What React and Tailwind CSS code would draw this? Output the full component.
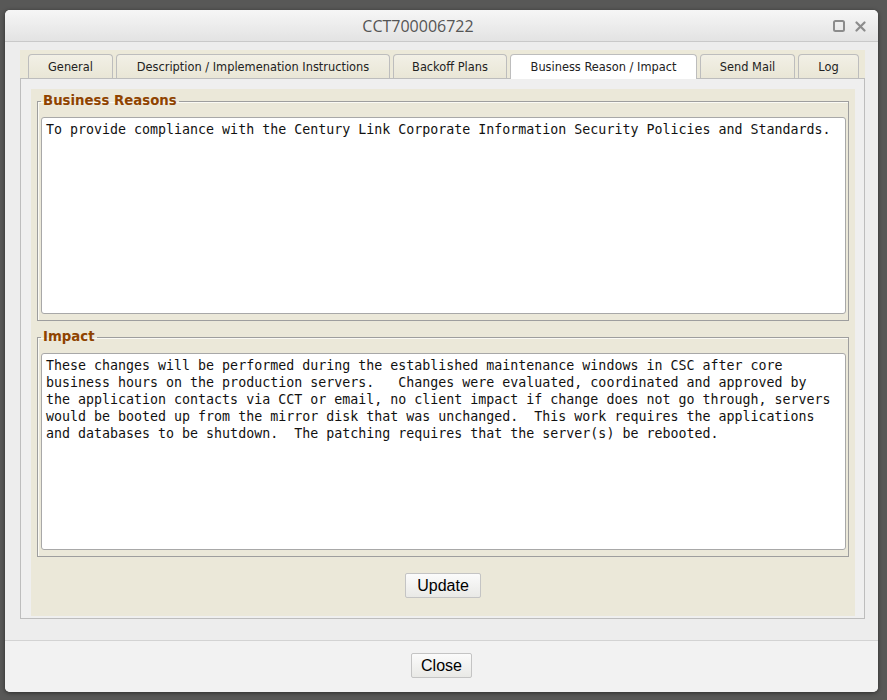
import React from 'react';

const tabs = [
  { label: 'General', w: 'w-[85px]' },
  { label: 'Description / Implemenation Instructions', w: 'w-[274px]' },
  { label: 'Backoff Plans', w: 'w-[114px]' },
  { label: 'Business Reason / Impact', w: 'w-[187px]', active: true },
  { label: 'Send Mail', w: 'w-[95px]' },
  { label: 'Log', w: 'w-[61px]' },
];

const reasons =
  'To provide compliance with the Century Link Corporate Information Security Policies and Standards.';

const impact = [
  'These changes will be performed during the established maintenance windows in CSC after core',
  'business hours on the production servers.   Changes were evaluated, coordinated and approved by',
  'the application contacts via CCT or email, no client impact if change does not go through, servers',
  'would be booted up from the mirror disk that was unchanged.  This work requires the applications',
  'and databases to be shutdown.  The patching requires that the server(s) be rebooted.',
].join('\n');

function Group({ title, text, className = '' }) {
  return (
    <fieldset
      className={`mx-[6px] border border-[#9e9e9e] px-[2px] pb-[6px] pt-[8px] shadow-[inset_1px_1px_0_#fbfaf4] ${className}`}
    >
      <legend className="ml-[1px] px-[2px] text-[13.3px] font-bold leading-[16px] text-[#8f4300] font-['DejaVu_Sans',sans-serif]">
        {title}
      </legend>
      <div className="ml-[1px] h-[197px] overflow-hidden whitespace-pre-wrap rounded-[3px] border border-[#a8a8a8] bg-white px-[4px] pt-[3px] text-[13.3px] leading-[17px] text-[#111] font-['DejaVu_Sans_Mono',monospace]">
        {text}
      </div>
    </fieldset>
  );
}

function Button({ children, className = '' }) {
  return (
    <button
      className={`h-[25px] rounded-[2px] border border-[#c4c4c4] bg-gradient-to-b from-[#fbfbfb] to-[#e9e9e6] text-[16px] leading-none text-black font-['Liberation_Sans',Arial,sans-serif] ${className}`}
    >
      {children}
    </button>
  );
}

export default function App() {
  return (
    <div className="h-[700px] w-[887px] overflow-hidden bg-[#585857] pt-[10px] pl-[5px]">
      <div className="flex h-[682px] w-[873px] flex-col overflow-hidden rounded-[5px] bg-[#ededed] shadow-[0_1px_4px_rgba(0,0,0,0.5)]">
        {/* title bar */}
        <div className="flex h-[32px] shrink-0 items-center border-b border-[#c9c9c9] bg-gradient-to-b from-[#f6f6f6] to-[#e3e3e3]">
          <span className="flex-1 pt-[1px] text-center text-[16px] text-[#555] font-['Open_Sans',sans-serif]">
            CCT700006722
          </span>
          <div className="flex w-[47px] items-center gap-[10px] pl-[2px] pt-[1px]">
            <svg width="12" height="12" viewBox="0 0 12 12">
              <rect x="1" y="1" width="10" height="10" rx="1.5" fill="none" stroke="#8c8c8c" strokeWidth="2" />
            </svg>
            <svg width="11" height="11" viewBox="0 0 11 11">
              <path d="M1.5 1.5 L9.5 9.5 M9.5 1.5 L1.5 9.5" stroke="#8c8c8c" strokeWidth="2.2" strokeLinecap="round" />
            </svg>
          </div>
        </div>

        {/* body */}
        <div className="flex-1 pl-[15px] pr-[13px] pt-[8px]">
          <div className="flex h-[28px] items-end gap-[3px] bg-[#ece9d9] pl-[8px]">
            {tabs.map((t) => (
              <div
                key={t.label}
                className={`${t.w} flex items-center justify-center rounded-t-[4px] border border-b-0 border-[#bdbdbd] pt-[2px] text-[11.4px] text-[#222] font-['DejaVu_Sans',sans-serif] ${
                  t.active
                    ? 'relative z-10 -mb-px h-[25px] bg-white'
                    : 'h-[24px] bg-gradient-to-b from-[#f2f0e6] to-[#e9e6d6]'
                }`}
              >
                {t.label}
              </div>
            ))}
          </div>

          <div className="border border-[#bdbdbd] bg-[#efefef] pb-[2px] pl-[10px] pr-[9px] pt-[10px]">
            <div className="flex flex-col bg-[#ebe8d9] pb-[18px] pt-[4px]">
              <Group title="Business Reasons" text={reasons} />
              <Group title="Impact" text={impact} className="mt-[8px]" />
              <div className="mt-[16px] flex justify-center">
                <Button className="h-[24px] w-[76px]">Update</Button>
              </div>
            </div>
          </div>
        </div>

        {/* footer */}
        <div className="flex h-[52px] shrink-0 justify-center border-t border-[#d3d3d3] bg-[#f2f2f2] pt-[12px]">
          <Button className="w-[61px]">Close</Button>
        </div>
      </div>
    </div>
  );
}
